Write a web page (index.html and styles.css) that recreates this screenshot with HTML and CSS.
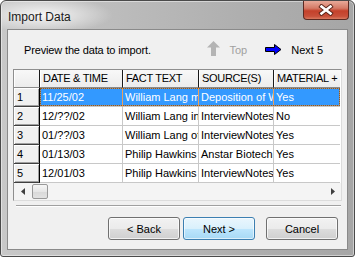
FILE: index.html
```html
<!DOCTYPE html>
<html>
<head>
    <title>Import Data</title>
    <link rel="stylesheet" href="styles.css">
</head>
<body>
    <div class="window">
        <div class="titlebar">
            <span class="title">Import Data</span>
            <div class="close-btn">
                <svg width="16" height="12" viewBox="0 0 16 12">
                    <path d="M3.5 2.5 L12.5 9.5 M12.5 2.5 L3.5 9.5" stroke="#5a2418" stroke-width="4.4" stroke-linecap="square"/>
                    <path d="M3.5 2.5 L12.5 9.5 M12.5 2.5 L3.5 9.5" stroke="#ffffff" stroke-width="2.6" stroke-linecap="square"/>
                </svg>
            </div>
        </div>

        <div class="client">
            <div class="toolbar">
                <span class="prompt">Preview the data to import.</span>
                <span class="nav disabled">
                    <svg width="13" height="15" viewBox="0 0 13 15">
                        <path d="M6.5 0 L13 6.5 L9 6.5 L9 15 L4 15 L4 6.5 L0 6.5 Z" fill="#b4b4b4"/>
                    </svg>
                    Top
                </span>
                <span class="nav">
                    <svg width="17" height="11" viewBox="0 0 17 11">
                        <path d="M0.5 3.5 L9.5 3.5 L9.5 0.5 L16 5.5 L9.5 10.5 L9.5 7.5 L0.5 7.5 Z" fill="#0000ff" stroke="#000" stroke-width="1"/>
                    </svg>
                    Next 5
                </span>
            </div>

            <div class="grid">
                <div class="row head">
                    <div class="cell c0"></div>
                    <div class="cell c1">DATE &amp; TIME</div>
                    <div class="cell c2">FACT TEXT</div>
                    <div class="cell c3">SOURCE(S)</div>
                    <div class="cell c4">MATERIAL +</div>
                </div>
                <div class="row selected">
                    <div class="cell c0">1</div>
                    <div class="cells">
                        <div class="cell c1">11/25/02</div>
                        <div class="cell c2">William Lang m</div>
                        <div class="cell c3">Deposition of W</div>
                        <div class="cell c4">Yes</div>
                    </div>
                </div>
                <div class="row">
                    <div class="cell c0">2</div>
                    <div class="cells">
                        <div class="cell c1">12/??/02</div>
                        <div class="cell c2">William Lang in</div>
                        <div class="cell c3">InterviewNotes</div>
                        <div class="cell c4">No</div>
                    </div>
                </div>
                <div class="row">
                    <div class="cell c0">3</div>
                    <div class="cells">
                        <div class="cell c1">01/??/03</div>
                        <div class="cell c2">William Lang of</div>
                        <div class="cell c3">InterviewNotes</div>
                        <div class="cell c4">Yes</div>
                    </div>
                </div>
                <div class="row">
                    <div class="cell c0">4</div>
                    <div class="cells">
                        <div class="cell c1">01/13/03</div>
                        <div class="cell c2">Philip Hawkins</div>
                        <div class="cell c3">Anstar Biotech</div>
                        <div class="cell c4">Yes</div>
                    </div>
                </div>
                <div class="row">
                    <div class="cell c0">5</div>
                    <div class="cells">
                        <div class="cell c1">12/01/03</div>
                        <div class="cell c2">Philip Hawkins</div>
                        <div class="cell c3">InterviewNotes</div>
                        <div class="cell c4">Yes</div>
                    </div>
                </div>
                <div class="hscroll">
                    <div class="arrow">
                        <svg width="4" height="7" viewBox="0 0 4 7"><path d="M4 0 L0 3.5 L4 7 Z" fill="#404040"/></svg>
                    </div>
                    <div class="thumb"></div>
                    <div class="track"></div>
                    <div class="arrow">
                        <svg width="4" height="7" viewBox="0 0 4 7"><path d="M0 0 L4 3.5 L0 7 Z" fill="#404040"/></svg>
                    </div>
                </div>
            </div>

            <div class="separator"></div>

            <div class="buttons">
                <button class="btn">&lt; Back</button>
                <button class="btn default">Next &gt;</button>
                <button class="btn cancel">Cancel</button>
            </div>
        </div>
    </div>
</body>
</html>
```

FILE: styles.css
```css
* {
    box-sizing: border-box;
    font-family: 'Liberation Sans', Arial, sans-serif;
}

body {
    margin: 0;
    padding: 0;
    background-color: #ffffff;
}

.window {
    width: 355px;
    height: 257px;
    border: 1px solid #4a4a4a;
    border-radius: 6px 6px 3px 3px;
    padding: 0 6px 6px 6px;
    background:
        radial-gradient(ellipse 70px 18px at 42px 14px, rgba(255, 255, 255, 0.85), rgba(255, 255, 255, 0)),
        linear-gradient(to right, #c8c8c8, #bdbdbd 30%, #aeaeae 70%, #a6a6a6);
    box-shadow: inset 0 0 0 1px rgba(255, 255, 255, 0.45);
}

.titlebar {
    height: 28px;
    display: flex;
    align-items: flex-start;
    justify-content: space-between;
}

.title {
    font-size: 12px;
    color: #1a1a1a;
    margin-top: 9px;
    margin-left: 1px;
}

.close-btn {
    width: 46px;
    height: 19px;
    margin-right: -1px;
    border: 1px solid #5b2a22;
    border-top: none;
    border-radius: 0 0 4px 4px;
    background: linear-gradient(to bottom, #e8a999 0%, #d47a66 40%, #c4412b 55%, #c8503a 85%, #d97b60 100%);
    display: flex;
    align-items: center;
    justify-content: center;
}

.client {
    height: 221px;
    border: 1px solid #8a8a8a;
    background-color: #f0f0f0;
}

.toolbar {
    height: 39px;
    display: flex;
    align-items: center;
    padding: 0 24px 0 16px;
    font-size: 11px;
}

.prompt {
    color: #000;
    letter-spacing: -0.15px;
    flex: 1;
}

.nav {
    display: flex;
    align-items: center;
    gap: 9px;
    color: #000;
}

.nav.disabled {
    color: #a0a0a0;
    margin-right: 18px;
}

.nav.disabled svg {
    margin-top: -2px;
}

.grid {
    margin: 0 5px;
    border: 1px solid;
    border-color: #8e8e8e #dcdcdc #dcdcdc #8e8e8e;
    background-color: #ffffff;
}

.row {
    display: flex;
    height: 19px;
}

.cells {
    display: flex;
    position: relative;
}

.cell {
    height: 19px;
    line-height: 18px;
    font-size: 11px;
    padding-left: 2px;
    white-space: nowrap;
    overflow: hidden;
    text-overflow: clip;
    border-right: 1px solid #c8c8c8;
    border-bottom: 1px solid #c8c8c8;
    color: #000;
}

.c0 { width: 26px; padding-left: 3px; }
.c1 { width: 83px; }
.c2 { width: 76px; }
.c3 { width: 75px; }
.c4 { width: 66px; border-right: none; }

.row .c0 {
    background-color: #f0f0f0;
    border-right: 1px solid #000;
    border-bottom: 1px solid #404040;
    box-shadow: inset 1px 1px #ffffff, inset -1px -1px #a0a0a0;
}

.row.head {
    height: 18px;
}

.row.head .cell {
    height: 18px;
    line-height: 17px;
    padding-left: 3px;
    letter-spacing: -0.3px;
    background: linear-gradient(to bottom, #f8f8f8, #ececec);
    border-right: 1px solid #1a1a1a;
    border-bottom: 1px solid #8a8a8a;
    box-shadow: inset 1px 0 #ffffff;
}

.row.head .c4 {
    border-right: none;
}

.row.selected .cells .cell {
    background-color: #3399ff;
    color: #ffffff;
    border-right-color: #e8a060;
    border-bottom-color: #c8c8c8;
}

.row.selected .cells::after {
    content: "";
    position: absolute;
    left: 0;
    top: 0;
    right: 0;
    bottom: 1px;
    border: 1px dotted #1a1a1a;
    outline: 1px solid rgba(240, 140, 40, 0.55);
    outline-offset: -1px;
}

.hscroll {
    height: 17px;
    display: flex;
    align-items: center;
    background-color: #f4f4f4;
}

.arrow {
    width: 17px;
    height: 17px;
    display: flex;
    align-items: center;
    justify-content: center;
}

.thumb {
    width: 16px;
    height: 15px;
    margin-left: 1px;
    border: 1px solid #989898;
    border-radius: 2px;
    background: linear-gradient(to bottom, #f6f6f6, #e6e6e6 50%, #d8d8d8 51%, #e2e2e2);
}

.track {
    flex: 1;
}

.separator {
    margin: 4px 6px 0 8px;
    height: 2px;
    border-top: 1px solid #a0a0a0;
    border-bottom: 1px solid #ffffff;
}

.buttons {
    display: flex;
    justify-content: flex-end;
    padding-right: 9px;
    margin-top: 10px;
}

.btn {
    width: 72px;
    height: 23px;
    margin-left: 3px;
    border: 1px solid #707070;
    border-radius: 3px;
    font-size: 11px;
    color: #000;
    background: linear-gradient(to bottom, #f2f2f2 0%, #ebebeb 50%, #dddddd 51%, #cfcfcf 100%);
    box-shadow: inset 0 0 0 1px rgba(255, 255, 255, 0.7);
    padding: 0;
}

.btn.default {
    border-color: #3c7fb1;
    background: linear-gradient(to bottom, #eaf6fd 0%, #d9f0fc 50%, #bee6fd 51%, #a7d9f5 100%);
    box-shadow: inset 0 0 0 1px rgba(255, 255, 255, 0.6);
}

.btn.cancel {
    margin-left: 11px;
}
```
